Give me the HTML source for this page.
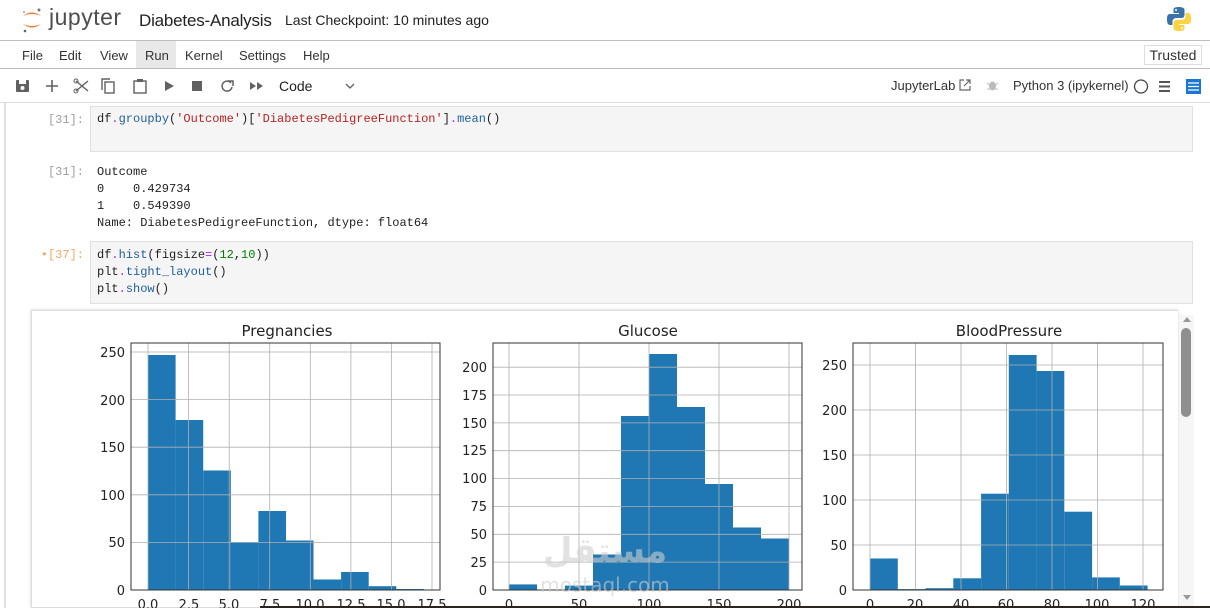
<!DOCTYPE html>
<html><head><meta charset="utf-8"><style>
*{box-sizing:border-box;margin:0;padding:0}
body{width:1210px;height:608px;overflow:hidden;background:#fff;font-family:"Liberation Sans",sans-serif;position:relative;color:#212121}
.abs{position:absolute}
.menu span{position:absolute;top:48px;font-size:13px;color:#333}
.prompt{position:absolute;font-family:"Liberation Mono",monospace;font-size:12px;color:#9e9e9e;text-align:right;width:60px;left:24px}
.inbox{position:absolute;left:90px;width:1103px;background:#f5f5f5;border:1px solid #e0e0e0}
.code{position:absolute;left:97px;font-family:"Liberation Mono","DejaVu Sans Mono",monospace;font-size:12px;line-height:17px;color:#212121;white-space:pre}
.b{color:#1f5f99}.s{color:#ba2121}.n{color:#008000}.o{color:#aa22ff}
</style></head><body>
<svg class="abs" style="left:20px;top:6px" width="24" height="28" viewBox="0 0 24 28">
<path d="M3 10 Q12 3 21 10 Q12 6 3 10Z" fill="#f37726"/>
<path d="M3 18 Q12 25 21 18 Q12 22 3 18Z" fill="#f37726"/>
<circle cx="19" cy="4" r="1.5" fill="#767677"/><circle cx="4" cy="6" r="1" fill="#9e9e9e"/><circle cx="5" cy="25" r="1.3" fill="#616262"/>
</svg>
<div class="abs" style="left:49px;top:4px;font-size:23px;color:#4e4e4e;letter-spacing:0.5px">jupyter</div>
<div class="abs" style="left:139px;top:11px;font-size:17px;color:#222;letter-spacing:-0.2px">Diabetes-Analysis</div>
<div class="abs" style="left:285px;top:12px;font-size:14px;color:#222">Last Checkpoint: 10 minutes ago</div>
<svg class="abs" style="left:1166px;top:6px" width="26" height="26" viewBox="0 0 26 26">
<path d="M12.5 1c-5 0-5 2-5 3v3h5.5v1H4C1 8 1 11 1 13.5S1.5 19 4 19h2.5v-3.5c0-2 1.8-3.5 3.5-3.5h5.5c1.8 0 3-1.3 3-3V4c0-1.8-1.6-3-6-3z" fill="#3a73a8"/>
<path d="M13.5 25c5 0 5-2 5-3v-3H13v-1h9c3 0 3-3 3-5.5S24.5 7 22 7h-2.5v3.5c0 2-1.8 3.5-3.5 3.5H10.5c-1.8 0-3 1.3-3 3V22c0 1.8 1.6 3 6 3z" fill="#fdd343"/>
<circle cx="10" cy="4" r="1" fill="#fff"/><circle cx="16" cy="22" r="1" fill="#fff"/></svg>
<div class="abs" style="left:0;top:40px;width:1210px;height:1px;background:#bdbdbd"></div>
<div class="abs" style="left:136px;top:41px;width:40px;height:27px;background:#e8e8e8"></div>
<div class="menu"><span style="left:22px">File</span><span style="left:59px">Edit</span><span style="left:100px">View</span><span style="left:145px">Run</span><span style="left:185px">Kernel</span><span style="left:239px">Settings</span><span style="left:303px">Help</span></div>
<div class="abs" style="left:1144px;top:45px;width:58px;height:20px;border:1px solid #ddd;font-size:14px;text-align:center;line-height:18px;color:#333">Trusted</div>
<div class="abs" style="left:0;top:68px;width:1210px;height:1px;background:#bdbdbd"></div>
<svg class="abs" style="left:14px;top:77px" width="350" height="18" viewBox="0 0 350 18" fill="#616161" stroke="#616161">
<rect x="2" y="3" width="13" height="12" rx="1" stroke="none"/><rect x="5" y="3" width="7" height="4" fill="#fff" stroke="none"/><circle cx="8.5" cy="11" r="2" fill="#fff" stroke="none"/>
<path d="M38 3v12M32 9h12" stroke-width="1.6" fill="none"/>
<path d="M62 4l12 10M74 4l-12 10" stroke-width="1.4" fill="none"/><circle cx="62" cy="14" r="2" fill="none"/><circle cx="62" cy="4" r="2" fill="none"/>
<rect x="91" y="5" width="9" height="11" fill="none" stroke-width="1.4"/><path d="M88 13V2h8" fill="none" stroke-width="1.4"/>
<rect x="120" y="4" width="12" height="12" fill="none" stroke-width="1.4"/><rect x="123" y="2" width="6" height="3" stroke="none"/>
<path d="M151 4l9 5-9 5z" stroke="none"/>
<rect x="178" y="4" width="10" height="10" stroke="none"/>
<path d="M217 6a5 5 0 1 0 1 4" fill="none" stroke-width="1.5"/><path d="M214 4h5v5" fill="none" stroke-width="1.5"/>
<path d="M236 5l6 4-6 4zM243 5l6 4-6 4z" stroke="none"/>
<path d="M332 7l4 4 4-4" fill="none" stroke-width="1.3"/>
</svg>
<div class="abs" style="left:279px;top:78px;font-size:14px;color:#222">Code</div>
<div class="abs" style="left:891px;top:78px;font-size:13px;color:#333">JupyterLab</div>
<svg class="abs" style="left:958px;top:78px" width="14" height="14"><path d="M6 2H2v10h10V8M8 2h4v4M12 2L6 8" fill="none" stroke="#666" stroke-width="1.2"/></svg>
<svg class="abs" style="left:986px;top:79px" width="13" height="13"><ellipse cx="6.5" cy="7" rx="3.5" ry="4.5" fill="#bbb"/><path d="M1 4l3 2M12 4l-3 2M1 10h3M12 10H9" stroke="#bbb"/></svg>
<div class="abs" style="left:1013px;top:78px;font-size:13px;color:#333">Python 3 (ipykernel)</div>
<svg class="abs" style="left:1133px;top:78px" width="70" height="17"><circle cx="8" cy="8.5" r="6.5" fill="none" stroke="#444" stroke-width="1.3"/><path d="M26 4h11M26 8.5h11M26 13h11" stroke="#555" stroke-width="2"/><rect x="53" y="1" width="15" height="15" fill="#1976d2"/><path d="M55 5h11M55 8.5h11M55 12h11" stroke="#fff" stroke-width="1.2"/></svg>
<div class="abs" style="left:0;top:102px;width:1210px;height:1px;background:#e0e0e0"></div>
<div class="abs" style="left:4px;top:103px;width:2px;height:505px;background:#e0e0e0"></div>
<div class="prompt" style="top:113px">[31]:</div>
<div class="inbox" style="top:106px;height:46px"></div>
<div class="code" style="top:111px">df<span class="o">.</span><span class="b">groupby</span>(<span class="s">'Outcome'</span>)[<span class="s">'DiabetesPedigreeFunction'</span>]<span class="o">.</span><span class="b">mean</span>()</div>
<div class="prompt" style="top:165px">[31]:</div>
<div class="code" style="top:164px">Outcome
0    0.429734
1    0.549390
Name: DiabetesPedigreeFunction, dtype: float64</div>
<div class="prompt" style="top:248px;color:#f3a766">•[37]:</div>
<div class="inbox" style="top:241px;height:63px"></div>
<div class="code" style="top:247px">df<span class="o">.</span><span class="b">hist</span>(figsize<span class="o">=</span>(<span class="n">12</span>,<span class="n">10</span>))
plt<span class="o">.</span><span class="b">tight_layout</span>()
plt<span class="o">.</span><span class="b">show</span>()</div>
<div class="abs" style="left:31px;top:310px;width:1147px;height:298px;border:1px solid #ddd;border-right:none;box-shadow:0 0 3px #ccc"></div>
<div class="abs" style="left:1180px;top:315px;width:14px;height:293px;background:#f6f6f6"></div>
<div class="abs" style="left:1181px;top:328px;width:10px;height:89px;border-radius:5px;background:#8f8f8f"></div>
<svg class="abs" style="left:1181px;top:314px" width="12" height="294"><path d="M2 8l4-5 4 5z" fill="#999"/><path d="M2 281l4 5 4-5z" fill="#999"/></svg>
<svg class="abs" style="left:0;top:0" width="1210" height="608">
<g font-family="DejaVu Sans, sans-serif" font-size="13" fill="#222">
<g fill="#1f77b4">
<rect x="148" y="355" width="27.6" height="235"/><rect x="175.6" y="420" width="27.6" height="170"/><rect x="203.2" y="470.5" width="27.6" height="119.5"/><rect x="230.8" y="542.5" width="27.6" height="47.5"/><rect x="258.4" y="511" width="27.6" height="79"/><rect x="286" y="540.5" width="27.5" height="49.5"/><rect x="313.5" y="579.5" width="27.6" height="10.5"/><rect x="341.1" y="572" width="27.6" height="18"/><rect x="368.7" y="586.2" width="27.6" height="3.8"/><rect x="396.3" y="589" width="27.6" height="1"/>
</g>
<g stroke="#b0b0b0" stroke-width="0.8">
<path d="M148 343V590M188.6 343V590M229.2 343V590M269.7 343V590M310.3 343V590M350.9 343V590M391.4 343V590M432 343V590"/>
<path d="M131 590H440M131 542.4H440M131 494.8H440M131 447.2H440M131 399.6H440M131 352H440"/>
</g>
<rect x="131" y="343" width="309" height="247" fill="none" stroke="#333" stroke-width="1"/>
<text x="287" y="336" text-anchor="middle" font-size="15">Pregnancies</text>
<g text-anchor="end"><text x="125" y="595">0</text><text x="125" y="547">50</text><text x="125" y="500">100</text><text x="125" y="452">150</text><text x="125" y="405">200</text><text x="125" y="357">250</text></g>
<g text-anchor="middle"><text x="148" y="609">0.0</text><text x="189" y="609">2.5</text><text x="229" y="609">5.0</text><text x="270" y="609">7.5</text><text x="310" y="609">10.0</text><text x="351" y="609">12.5</text><text x="391" y="609">15.0</text><text x="432" y="609">17.5</text></g>
<g fill="#1f77b4">
<rect x="509" y="584.4" width="28" height="5.6"/><rect x="565" y="585.6" width="28" height="4.4"/><rect x="593" y="554.5" width="28" height="35.5"/><rect x="621" y="416" width="28" height="174"/><rect x="649" y="354" width="28" height="236"/><rect x="677" y="407" width="28" height="183"/><rect x="705" y="484" width="28" height="106"/><rect x="733" y="527.5" width="28" height="62.5"/><rect x="761" y="538.5" width="28" height="51.5"/>
</g>
<g stroke="#b0b0b0" stroke-width="0.8">
<path d="M509 343V590M579 343V590M649 343V590M719 343V590M789 343V590"/>
<path d="M493 590H802M493 562.1H802M493 534.3H802M493 506.4H802M493 478.6H802M493 450.7H802M493 422.9H802M493 395H802M493 367.2H802"/>
</g>
<rect x="493" y="343" width="309" height="247" fill="none" stroke="#333"/>
<text x="648" y="336" text-anchor="middle" font-size="15">Glucose</text>
<g text-anchor="end"><text x="487" y="595">0</text><text x="487" y="567">25</text><text x="487" y="539">50</text><text x="487" y="511">75</text><text x="487" y="483">100</text><text x="487" y="455">125</text><text x="487" y="428">150</text><text x="487" y="400">175</text><text x="487" y="372">200</text></g>
<g text-anchor="middle"><text x="509" y="609">0</text><text x="579" y="609">50</text><text x="649" y="609">100</text><text x="719" y="609">150</text><text x="789" y="609">200</text></g>
<g fill="#1f77b4">
<rect x="870" y="558.5" width="27.8" height="31.5"/><rect x="897.8" y="589.1" width="27.7" height="0.9"/><rect x="925.5" y="588.2" width="27.8" height="1.8"/><rect x="953.3" y="578.3" width="27.8" height="11.7"/><rect x="981.1" y="493.7" width="27.7" height="96.3"/><rect x="1008.8" y="355" width="27.8" height="235"/><rect x="1036.6" y="371" width="27.7" height="219"/><rect x="1064.3" y="511.7" width="27.8" height="78.3"/><rect x="1092.1" y="577.4" width="27.7" height="12.6"/><rect x="1119.8" y="585.5" width="27.8" height="4.5"/>
</g>
<g stroke="#b0b0b0" stroke-width="0.8">
<path d="M870 343V590M915.5 343V590M961 343V590M1006.5 343V590M1052 343V590M1097.5 343V590M1143 343V590"/>
<path d="M853 590H1163M853 545H1163M853 500H1163M853 455H1163M853 410H1163M853 365H1163"/>
</g>
<rect x="853" y="343" width="310" height="247" fill="none" stroke="#333"/>
<text x="1009" y="336" text-anchor="middle" font-size="15">BloodPressure</text>
<g text-anchor="end"><text x="847" y="595">0</text><text x="847" y="550">50</text><text x="847" y="505">100</text><text x="847" y="460">150</text><text x="847" y="415">200</text><text x="847" y="370">250</text></g>
<g text-anchor="middle"><text x="870" y="609">0</text><text x="915" y="609">20</text><text x="961" y="609">40</text><text x="1006" y="609">60</text><text x="1052" y="609">80</text><text x="1097" y="609">100</text><text x="1143" y="609">120</text></g>
</g>
<text x="605" y="562" text-anchor="middle" font-family="DejaVu Sans, sans-serif" font-size="34" font-weight="bold" fill="#cfcfcf" opacity="0.6">مستقل</text>
<text x="605" y="592" text-anchor="middle" font-family="DejaVu Sans, sans-serif" font-size="20" fill="#cfcfcf" opacity="0.6">mostaql.com</text>
</svg>
<div class="abs" style="left:260px;top:606px;width:950px;height:2px;background:#2a2520"></div>
</body></html>
